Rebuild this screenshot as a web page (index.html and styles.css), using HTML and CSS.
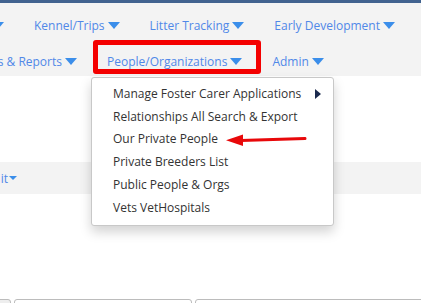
FILE: index.html
```html
<!DOCTYPE html>
<html lang="en">
<head>
    <meta charset="UTF-8">
    <meta name="viewport" content="width=device-width, initial-scale=1.0">
    <title>People/Organizations</title>
    <link rel="stylesheet" href="styles.css">
</head>
<body>
    <div class="topbar"></div>
    <div class="navbar">
        <ul class="nav-row">
            <li class="nav-item cut cut-one"><span class="caret"></span></li>
            <li class="nav-item">Kennel/Trips <span class="caret"></span></li>
            <li class="nav-item">Litter Tracking <span class="caret"></span></li>
            <li class="nav-item">Early Development <span class="caret"></span></li>
        </ul>
        <ul class="nav-row">
            <li class="nav-item cut cut-two">s &amp; Reports <span class="caret"></span></li>
            <li class="nav-item open">
                People/Organizations <span class="caret"></span>
                <span class="highlight"></span>
                <ul class="dropdown">
                    <li>Manage Foster Carer Applications <span class="sub-caret"></span></li>
                    <li>Relationships All Search &amp; Export</li>
                    <li>Our Private People</li>
                    <li>Private Breeders List</li>
                    <li>Public People &amp; Orgs</li>
                    <li>Vets VetHospitals</li>
                </ul>
                <svg class="pointer" width="84" height="14" viewBox="0 0 84 14">
                    <path d="M16 7.5 L80 5.5" stroke="#e8080a" stroke-width="3" stroke-linecap="round" fill="none"/>
                    <path d="M1 7.2 L18 1.5 L18 13 Z" fill="#e8080a"/>
                </svg>
            </li>
            <li class="nav-item">Admin <span class="caret"></span></li>
        </ul>
    </div>

    <div class="content">
        <div class="toolbar">
            <span class="tool-link">it <span class="caret small"></span></span>
        </div>
        <div class="tabs">
            <div class="tab tab-a"></div>
            <div class="tab tab-b"></div>
            <div class="tab tab-c"></div>
        </div>
    </div>
</body>
</html>
```

FILE: styles.css
```css
* {
    margin: 0;
    padding: 0;
    box-sizing: border-box;
}

body {
    font-family: 'Open Sans', 'DejaVu Sans', sans-serif;
    font-size: 12px;
    background: white;
    overflow: hidden;
}

.topbar {
    height: 3px;
    background: #41628f;
}

.navbar {
    height: 73px;
    background: #f3f3f3;
    padding-top: 4px;
}

.nav-row {
    list-style: none;
    display: flex;
    white-space: nowrap;
}

.nav-item {
    position: relative;
    flex-shrink: 0;
    height: 36px;
    padding: 0 15px;
    display: flex;
    align-items: center;
    gap: 3px;
    color: #5088e8;
}

/* items whose left part runs off the page */
.nav-item.cut {
    justify-content: flex-end;
    padding-left: 0;
}

.cut-one {
    width: 19px;
}

.cut-two {
    width: 92px;
}

.caret {
    display: inline-block;
    flex-shrink: 0;
    width: 0;
    height: 0;
    border-left: 6px solid transparent;
    border-right: 6px solid transparent;
    border-top: 7px solid #3b8eea;
}

.caret.small {
    border-left-width: 4px;
    border-right-width: 4px;
    border-top-width: 4px;
}

.highlight {
    position: absolute;
    left: 1px;
    top: -3px;
    width: 168px;
    height: 34px;
    border: 5px solid #f40000;
    border-radius: 3px;
}

.dropdown {
    position: absolute;
    left: -1px;
    top: 34px;
    width: 243px;
    list-style: none;
    background: white;
    border: 1px solid #c8c8c8;
    border-radius: 3px;
    box-shadow: 0 6px 12px rgba(0,0,0,0.175);
    padding: 5px 0 6px;
    z-index: 2;
}

.dropdown li {
    position: relative;
    padding-left: 21px;
    line-height: 22.7px;
    color: #333;
}

.sub-caret {
    position: absolute;
    right: 12px;
    top: 6px;
    width: 0;
    height: 0;
    border-top: 5px solid transparent;
    border-bottom: 5px solid transparent;
    border-left: 6px solid #1b2a4e;
}

.pointer {
    position: absolute;
    left: 133px;
    top: 90px;
    z-index: 3;
}

.content {
    padding-top: 86px;
}

.toolbar {
    height: 32px;
    background: #f3f3f3;
    display: flex;
    align-items: center;
}

.tool-link {
    width: 17px;
    flex-shrink: 0;
    justify-content: flex-end;
    color: #5088e8;
    display: flex;
    align-items: center;
    gap: 1px;
    white-space: nowrap;
}

.tabs {
    display: flex;
    gap: 3px;
    margin-top: 105px;
}

.tab {
    height: 20px;
    border: 1px solid #bcbcbc;
    border-radius: 3px 3px 0 0;
}

.tab-a {
    width: 14px;
    background: #eee;
    margin-left: -3px;
}

.tab-b {
    width: 178px;
}

.tab-c {
    flex: 1;
    margin-right: -3px;
}
```
